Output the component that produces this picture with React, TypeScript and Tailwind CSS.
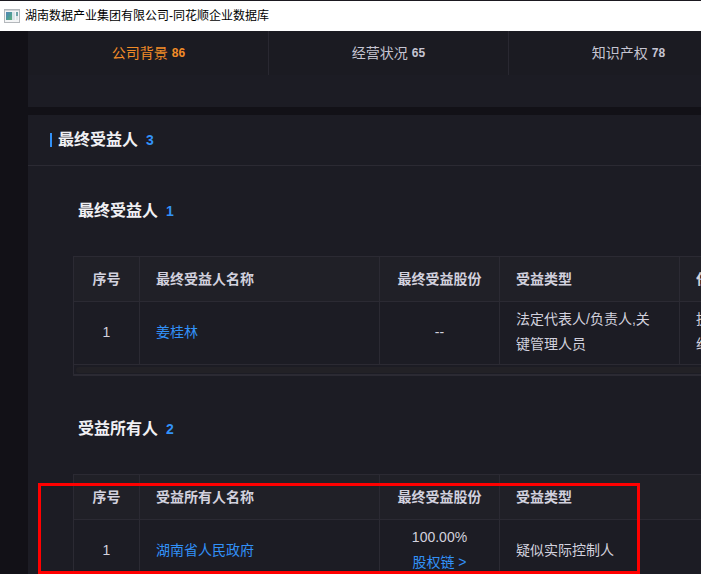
import type { ReactNode } from "react";

const tabs = [
  { name: "公司背景", count: 86 },
  { name: "经营状况", count: 65 },
  { name: "知识产权", count: 78 },
];

const headStyle = "h-[45px] border border-[#2b2a33] bg-[#202027] font-bold leading-[25px]";
const cellStyle = "h-[63px] border border-[#2b2a33] pt-1 pb-1.5 leading-[25px]";

const WindowIcon = () => (
  <svg width="16" height="14" viewBox="0 0 16 14" aria-hidden="true">
    <defs>
      <linearGradient id="pane" x1="0" y1="0" x2="1" y2="1">
        <stop offset="0" stopColor="#5585b8" />
        <stop offset="0.5" stopColor="#4d9a9c" />
        <stop offset="1" stopColor="#62b07a" />
      </linearGradient>
    </defs>
    <rect x="0.5" y="0.5" width="15" height="13" fill="#f4f5f6" stroke="#b4b8bc" />
    <rect x="1" y="1" width="14" height="1" fill="#cfd3d7" />
    <rect x="2" y="3" width="6" height="8" fill="url(#pane)" />
    <rect x="8" y="3" width="3" height="8" fill="#d9e3e8" />
    <rect x="12" y="3" width="2" height="4" fill="#6fa3a8" />
    <rect x="12" y="7" width="2" height="4" fill="#dfe6e8" />
  </svg>
);

const SubTitle = ({ name, count }: { name: string; count: number }) => (
  <h3 className="flex h-[90px] items-center gap-2 pl-[50px] text-base font-bold text-[#f0f0f4]">
    {name}
    <span className="text-sm text-[#3291f8]">{count}</span>
  </h3>
);

const DataTable = ({ children }: { children: ReactNode }) => (
  <table className="w-[907px] table-fixed border-collapse text-left text-sm text-[#d2d1de]">
    <colgroup>
      <col className="w-[66px]" />
      <col className="w-[240px]" />
      <col className="w-[120px]" />
      <col className="w-[180px]" />
      <col />
    </colgroup>
    {children}
  </table>
);

export default function App() {
  return (
    <div className="flex h-screen flex-col overflow-hidden bg-[#121117] font-['Liberation_Sans','Noto_Sans_CJK_SC',sans-serif]">
      <header className="flex h-[31px] shrink-0 items-center gap-[5px] border-t border-[#1b1920] bg-white pl-1">
        <WindowIcon />
        <h1 className="text-xs text-black">湖南数据产业集团有限公司-同花顺企业数据库</h1>
      </header>

      <main className="flex min-h-0 flex-1 flex-col gap-2 overflow-hidden pl-7">
        <nav className="shrink-0 bg-[#1c1c24] pb-8">
          <div className="flex h-11 bg-[#1b1b22] pl-px">
            {tabs.map((tab, i) => (
              <button
                key={tab.name}
                className={`flex w-[240px] shrink-0 items-center justify-center gap-1 border-r border-[#292831] text-sm ${
                  i === 0 ? "text-[#f28c28]" : "text-[#c6c5d2]"
                }`}
              >
                {tab.name}
                <span className="text-xs font-bold">{tab.count}</span>
              </button>
            ))}
          </div>
        </nav>

        <section className="shrink-0 bg-[#1c1c24] pb-8">
          <h2 className="flex h-[51px] items-center border-b border-[#2b2a33] pl-[22px] text-base font-bold text-[#f0f0f4]">
            <span className="mr-1.5 h-3.5 w-0.5 bg-[#3291f8]" />
            最终受益人
            <span className="ml-2 text-sm text-[#3291f8]">3</span>
          </h2>

          <SubTitle name="最终受益人" count={1} />
          <div className="ml-[45px] overflow-hidden border-b-2 border-l border-[#2b2a33]">
            <div className="-ml-px">
              <DataTable>
                <thead>
                  <tr>
                    <th className={`${headStyle} text-center`}>序号</th>
                    <th className={`${headStyle} px-4`}>最终受益人名称</th>
                    <th className={`${headStyle} text-center`}>最终受益股份</th>
                    <th className={`${headStyle} px-4`}>受益类型</th>
                    <th className={`${headStyle} px-4`}>任职类型</th>
                  </tr>
                </thead>
                <tbody>
                  <tr>
                    <td className={`${cellStyle} text-center`}>1</td>
                    <td className={`${cellStyle} px-4`}>
                      <a href="#" className="text-[#3291f8]">姜桂林</a>
                    </td>
                    <td className={`${cellStyle} text-center`}>--</td>
                    <td className={`${cellStyle} px-4`}>法定代表人/负责人,关键管理人员</td>
                    <td className={`${cellStyle} px-4`}>
                      执行董事
                      <br />
                      经理
                    </td>
                  </tr>
                </tbody>
              </DataTable>
            </div>
            <div className="mt-0.5 mb-px ml-0.5 h-1.5 rounded-l-full bg-[#222126]" />
          </div>

          <div className="relative mt-2">
            <SubTitle name="受益所有人" count={2} />
            <div className="ml-[45px] overflow-hidden">
              <DataTable>
                <thead>
                  <tr>
                    <th className={`${headStyle} text-center`}>序号</th>
                    <th className={`${headStyle} px-4`}>受益所有人名称</th>
                    <th className={`${headStyle} text-center`}>最终受益股份</th>
                    <th colSpan={2} className={`${headStyle} px-4`}>受益类型</th>
                  </tr>
                </thead>
                <tbody>
                  <tr>
                    <td className={`${cellStyle} text-center`}>1</td>
                    <td className={`${cellStyle} px-4`}>
                      <a href="#" className="text-[#3291f8]">湖南省人民政府</a>
                    </td>
                    <td className={`${cellStyle} text-center`}>
                      100.00%
                      <br />
                      <a href="#" className="text-[#3291f8]">股权链 &gt;</a>
                    </td>
                    <td colSpan={2} className={`${cellStyle} px-4`}>疑似实际控制人</td>
                  </tr>
                </tbody>
              </DataTable>
            </div>
            {/* highlight box over the owners table */}
            <div className="pointer-events-none absolute top-[99px] left-2.5 h-[91px] w-[602px] border-3 border-[#ff0000]" />
          </div>
        </section>
      </main>
    </div>
  );
}
